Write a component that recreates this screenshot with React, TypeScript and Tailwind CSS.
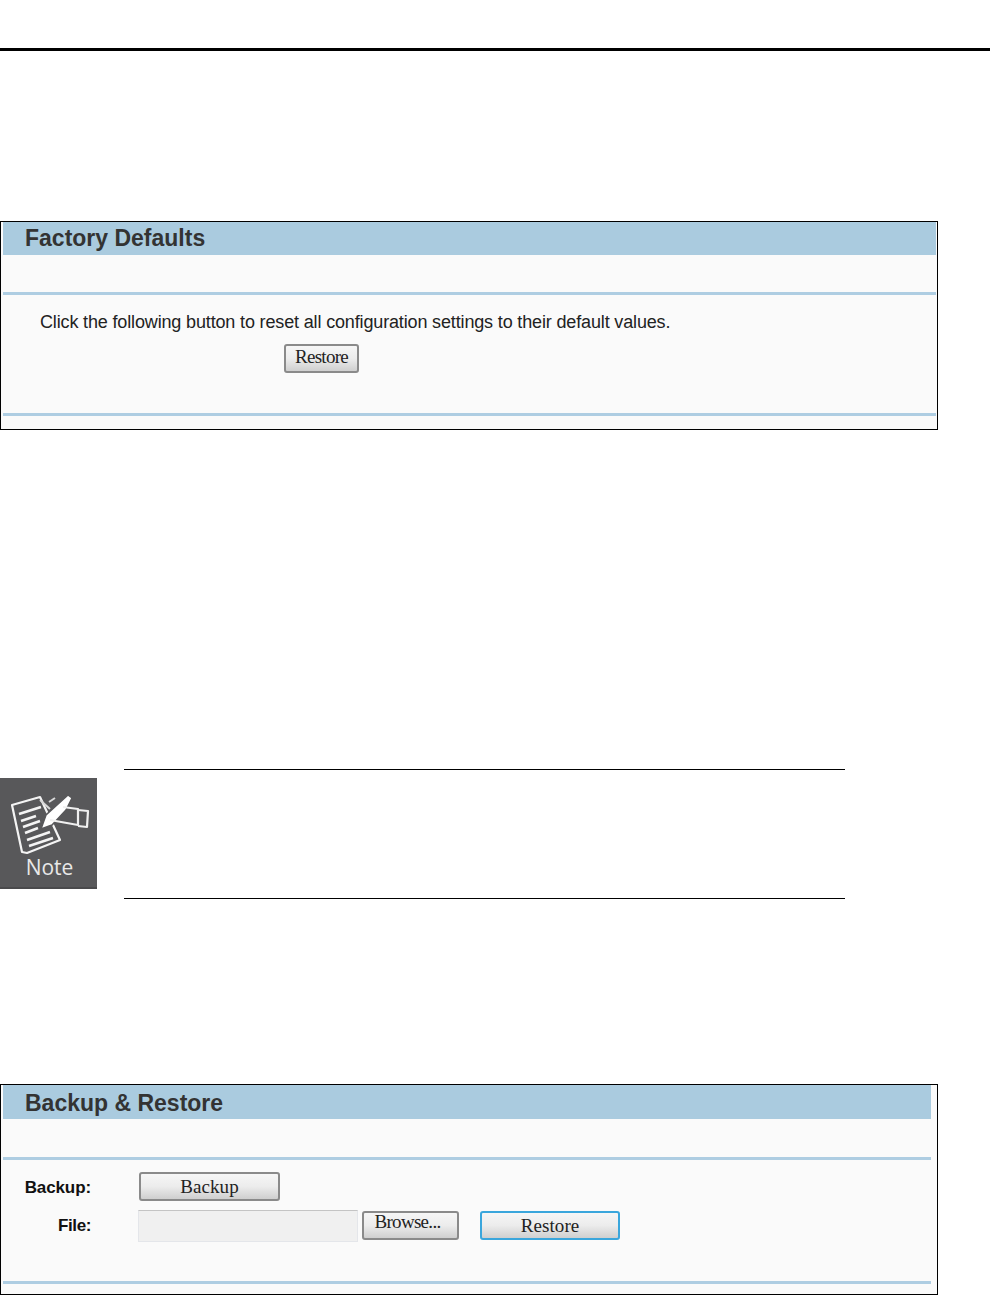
function Panel({ title, inset, children, heightClass, headerClass, gapClass }: {
  title: string
  inset: string
  children: React.ReactNode
  heightClass: string
  headerClass: string
  gapClass: string
}) {
  return (
    <div className={`w-[938px] border border-black bg-[#fafafa] pl-[2px] flex flex-col ${inset} ${heightClass}`}>
      <div className={`bg-[#aacbdf] pl-[22px] text-[23px] font-bold text-[#333] font-['Liberation_Sans',Arial,sans-serif] ${headerClass}`}>
        {title}
      </div>
      <div className={`h-[3px] bg-[#aecde2] ${gapClass}`} />
      {children}
    </div>
  )
}

function OldButton({ children, className, blue }: { children: React.ReactNode; className: string; blue?: boolean }) {
  return (
    <button
      className={`h-[29px] rounded-[3px] border-2 bg-gradient-to-b from-[#f6f6f6] via-[#ececec] to-[#cfcfcf] font-normal font-['Liberation_Serif','Times_New_Roman',serif] text-[#222] text-[19px] leading-[22px] ${blue ? "border-[#3aa6dc]" : "border-[#8a8a8a]"} ${className}`}
    >
      {children}
    </button>
  )
}

function NoteIcon() {
  return (
    <div className="w-[97px] h-[111px] mt-[9px] bg-[#58585a] border-b-2 border-[#4a4a4c] flex flex-col items-center shrink-0">
      <svg width="97" height="78" viewBox="0 0 97 78" fill="none" className="shrink-0">
        {/* paper */}
        <path d="M12 27 L40 19 L60 62 L27 75 L22 74 Z" stroke="#f4f4f4" strokeWidth="2.2" strokeLinejoin="round" />
        <path d="M19 36 L41 29 M21 43 L36 38 M23 49 L40 43 M25 55 L38 50 M27 62 L50 54 M29 68 L53 60" stroke="#f4f4f4" strokeWidth="2.6" />
        {/* pen */}
        <path d="M41 51 L46 37 L68 17 L72 20 L66 32 L52 47 Z" fill="#fff" stroke="#58585a" strokeWidth="1.5" />
        <path d="M40 22 L50 31 M49 24 L55 20" stroke="#d8d8d8" strokeWidth="2" />
        {/* hand */}
        <path d="M63 29 L78 31 L78 47 L50 42" stroke="#f0f0f0" strokeWidth="2.2" strokeLinejoin="round" />
        <path d="M78 32 L88 33 L87 49 L78 48" stroke="#f0f0f0" strokeWidth="2.2" strokeLinejoin="round" />
      </svg>
      <span className="ml-[2px] font-['Open_Sans','Noto_Sans',sans-serif] text-[21px] leading-[24px] text-[#e8e8e8] -mt-[1px]">Note</span>
    </div>
  )
}

export default function App() {
  return (
    <div className="w-[990px] h-[1295px] bg-white overflow-hidden">
      <div className="h-[48px]" />
      <div className="h-[3px] bg-black" />

      <div className="h-[170px]" />
      <Panel
        title="Factory Defaults"
        inset="pr-[1px]"
        heightClass="h-[209px]"
        headerClass="h-[33px] leading-[32px]"
        gapClass="mt-[37px]"
      >
        <p className="mt-[16px] ml-[37px] h-[22px] text-[18px] leading-[22px] text-[#222] tracking-[-0.15px] font-['Liberation_Sans',Arial,sans-serif]">
          Click the following button to reset all configuration settings to their default values.
        </p>
        <OldButton className="w-[75px] ml-[281px] mt-[11px] tracking-[-0.7px]">
          <span className="block leading-[16px] mb-[4px]">Restore</span>
        </OldButton>
        <div className="h-[3px] bg-[#aecde2] mt-[40px]" />
      </Panel>

      <div className="h-[339px] flex items-start">
        <div className="mt-[339px] flex items-start">
          <NoteIcon />
          <div className="ml-[27px] w-[721px] h-[130px] border-y border-black" />
        </div>
      </div>

      <div className="h-[315px]" />
      <Panel
        title="Backup & Restore"
        inset="pr-[6px]"
        heightClass="h-[211px]"
        headerClass="h-[34px] leading-[36px]"
        gapClass="mt-[38px]"
      >
        <div className="mt-[12px] flex items-center h-[29px] font-['Liberation_Sans',Arial,sans-serif] text-[#111] font-bold text-[17px] tracking-[-0.1px]">
          <span className="w-[88px] text-right pt-[2px]">Backup:</span>
          <OldButton className="w-[141px] ml-[48px] tracking-[0.1px]">Backup</OldButton>
        </div>
        <div className="mt-[9px] flex items-start h-[32px] font-['Liberation_Sans',Arial,sans-serif]">
          <span className="w-[88px] text-right text-[#111] font-bold text-[17px] leading-[32px] tracking-[-0.4px]">File:</span>
          <div className="w-[220px] h-[32px] ml-[47px] bg-[#f0f0f0] border border-[#e4e6ea] border-t-[#c4c4c4]" />
          <OldButton className="w-[97px] ml-[4px] mt-[1px] tracking-[-0.7px]">
            <span className="block leading-[14px] mb-[8px] mr-[6px]">Browse...</span>
          </OldButton>
          <OldButton blue className="w-[140px] ml-[21px] mt-[1px] tracking-[0.1px]">Restore</OldButton>
        </div>
        <div className="h-[3px] bg-[#aecde2] mt-[39px]" />
      </Panel>
    </div>
  )
}
